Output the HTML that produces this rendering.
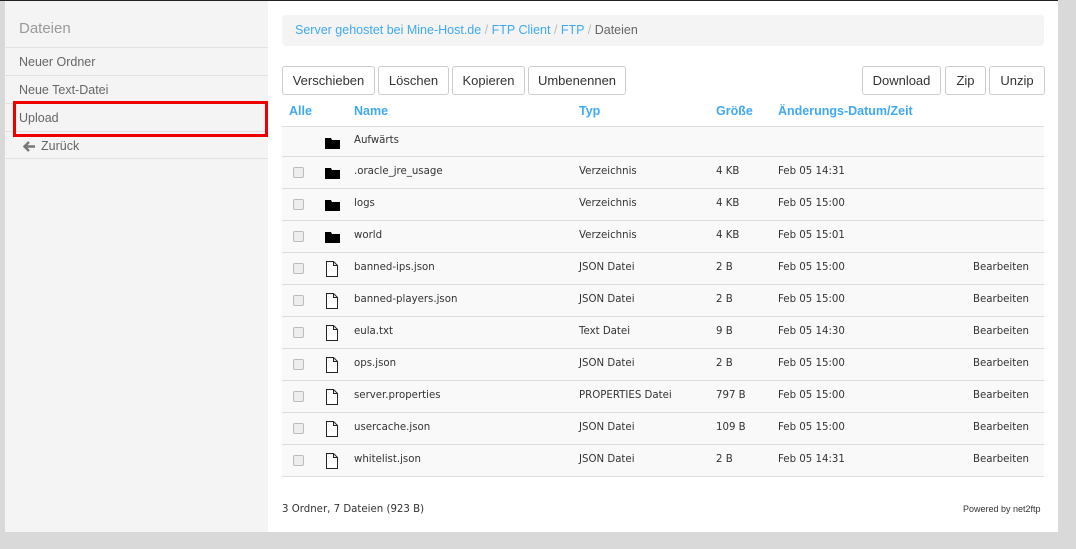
<!DOCTYPE html><html><head><meta charset="utf-8"><style>
*{box-sizing:border-box;margin:0;padding:0}
body{width:1076px;height:549px;background:#d9d9d9;font-family:"Liberation Sans",sans-serif;position:relative;overflow:hidden}
.a{position:absolute;white-space:nowrap}
#top{left:0;top:0;width:1058px;height:1px;background:#222}
#side{left:5px;top:1px;width:263px;height:531px;background:#f4f4f4}
#main{left:268px;top:1px;width:790px;height:531px;background:#fff}
.si{left:5px;width:263px;height:28px;border-top:1px solid #e2e2e2;font-size:12.5px;color:#666;padding:7px 0 0 14px}
.btn{top:66px;height:29px;border:1px solid #ccc;border-radius:3px;font-size:13px;color:#333;text-align:center;line-height:27px;background:#fff}
.h{top:104px;font-size:12.5px;font-weight:bold;color:#3fa9f5}
.row{left:282px;width:762px;height:32px;background:#f9f9f9;border-top:1px solid #ddd;font-size:10.2px;color:#333;font-family:"DejaVu Sans",sans-serif}
.row span{position:absolute;top:9px}
.cb{position:absolute;left:11px;top:10px;width:11px;height:11px;border:1px solid #bbb;border-radius:2px;background:#eee}
</style></head><body>
<div class="a" id="top"></div>
<div class="a" id="side"></div>
<div class="a" id="main"></div>
<div class="a" style="left:19px;top:20px;font-size:15px;color:#999">Dateien</div>
<div class="a si" style="top:47px">Neuer Ordner</div>
<div class="a si" style="top:75px">Neue Text-Datei</div>
<div class="a si" style="top:103px">Upload</div>
<div class="a si" style="top:131px;border-bottom:1px solid #e2e2e2;padding-left:36px"><svg style="position:absolute;left:18px;top:9px" width="13" height="11"><path d="M6 1L1.5 5.5L6 10M2 5.5h10" fill="none" stroke="#777" stroke-width="2.4"/></svg>Zurück</div>
<div class="a" style="left:13px;top:101px;width:255px;height:36px;border:3px solid #e00"></div>
<div class="a" style="left:282px;top:15px;width:762px;height:31px;background:#f4f4f4;border-radius:4px;font-size:12.5px;padding:8px 0 0 13px;color:#3fa9f5">Server gehostet bei Mine-Host.de <span style="color:#bbb">/</span> FTP Client <span style="color:#bbb">/</span> FTP <span style="color:#bbb">/</span> <span style="color:#666">Dateien</span></div>
<div class="a btn" style="left:282px;width:93px">Verschieben</div>
<div class="a btn" style="left:378px;width:71px">Löschen</div>
<div class="a btn" style="left:452px;width:73px">Kopieren</div>
<div class="a btn" style="left:528px;width:98px">Umbenennen</div>
<div class="a btn" style="left:862px;width:79px">Download</div>
<div class="a btn" style="left:945px;width:41px">Zip</div>
<div class="a btn" style="left:989px;width:56px">Unzip</div>
<div class="a h" style="left:289px">Alle</div>
<div class="a h" style="left:354px">Name</div>
<div class="a h" style="left:579px">Typ</div>
<div class="a h" style="left:716px">Größe</div>
<div class="a h" style="left:778px">Änderungs-Datum/Zeit</div>
<div class="a row" style="top:126px;height:30px;border-top:1px solid #ddd"><svg style="position:absolute;left:43px;top:10px" width="15" height="12"><path d="M0 1h6l1 2h8v9H0z" fill="#000"/></svg><span style="left:72px;top:8px">Aufwärts</span></div>
<div id="rows"></div>
<div class="a" style="left:282px;top:476px;width:762px;border-top:1px solid #ddd"></div>
<div class="a" style="left:282px;top:504px;font-size:10.2px;color:#333;font-family:'DejaVu Sans',sans-serif">3 Ordner, 7 Dateien (923 B)</div>
<div class="a" style="left:963px;top:504px;font-size:9px;color:#333">Powered by net2ftp</div>
<script>
var d=[[".oracle_jre_usage","Verzeichnis","4 KB","Feb 05 14:31",0],["logs","Verzeichnis","4 KB","Feb 05 15:00",0],["world","Verzeichnis","4 KB","Feb 05 15:01",0],["banned-ips.json","JSON Datei","2 B","Feb 05 15:00",1],["banned-players.json","JSON Datei","2 B","Feb 05 15:00",1],["eula.txt","Text Datei","9 B","Feb 05 14:30",1],["ops.json","JSON Datei","2 B","Feb 05 15:00",1],["server.properties","PROPERTIES Datei","797 B","Feb 05 15:00",1],["usercache.json","JSON Datei","109 B","Feb 05 15:00",1],["whitelist.json","JSON Datei","2 B","Feb 05 14:31",1]];
var h="";d.forEach(function(r,i){var ic=r[4]?'<svg style="position:absolute;left:43px;top:8px" width="14" height="16"><path d="M1.5 .5h7l4 4v11h-11z" fill="#fff" stroke="#222"/><path d="M8.5 .5v4h4" fill="none" stroke="#222"/></svg>':'<svg style="position:absolute;left:43px;top:10px" width="15" height="12"><path d="M0 1h6l1 2h8v9H0z" fill="#000"/></svg>';
h+='<div class="a row" style="top:'+(156+32*i)+'px"><div class="cb"></div>'+ic+'<span style="left:72px">'+r[0]+'</span><span style="left:297px">'+r[1]+'</span><span style="left:434px">'+r[2]+'</span><span style="left:496px">'+r[3]+'</span>'+(r[4]?'<span style="left:691px">Bearbeiten</span>':'')+'</div>';});
document.getElementById("rows").outerHTML=h;
</script>
</body></html>
